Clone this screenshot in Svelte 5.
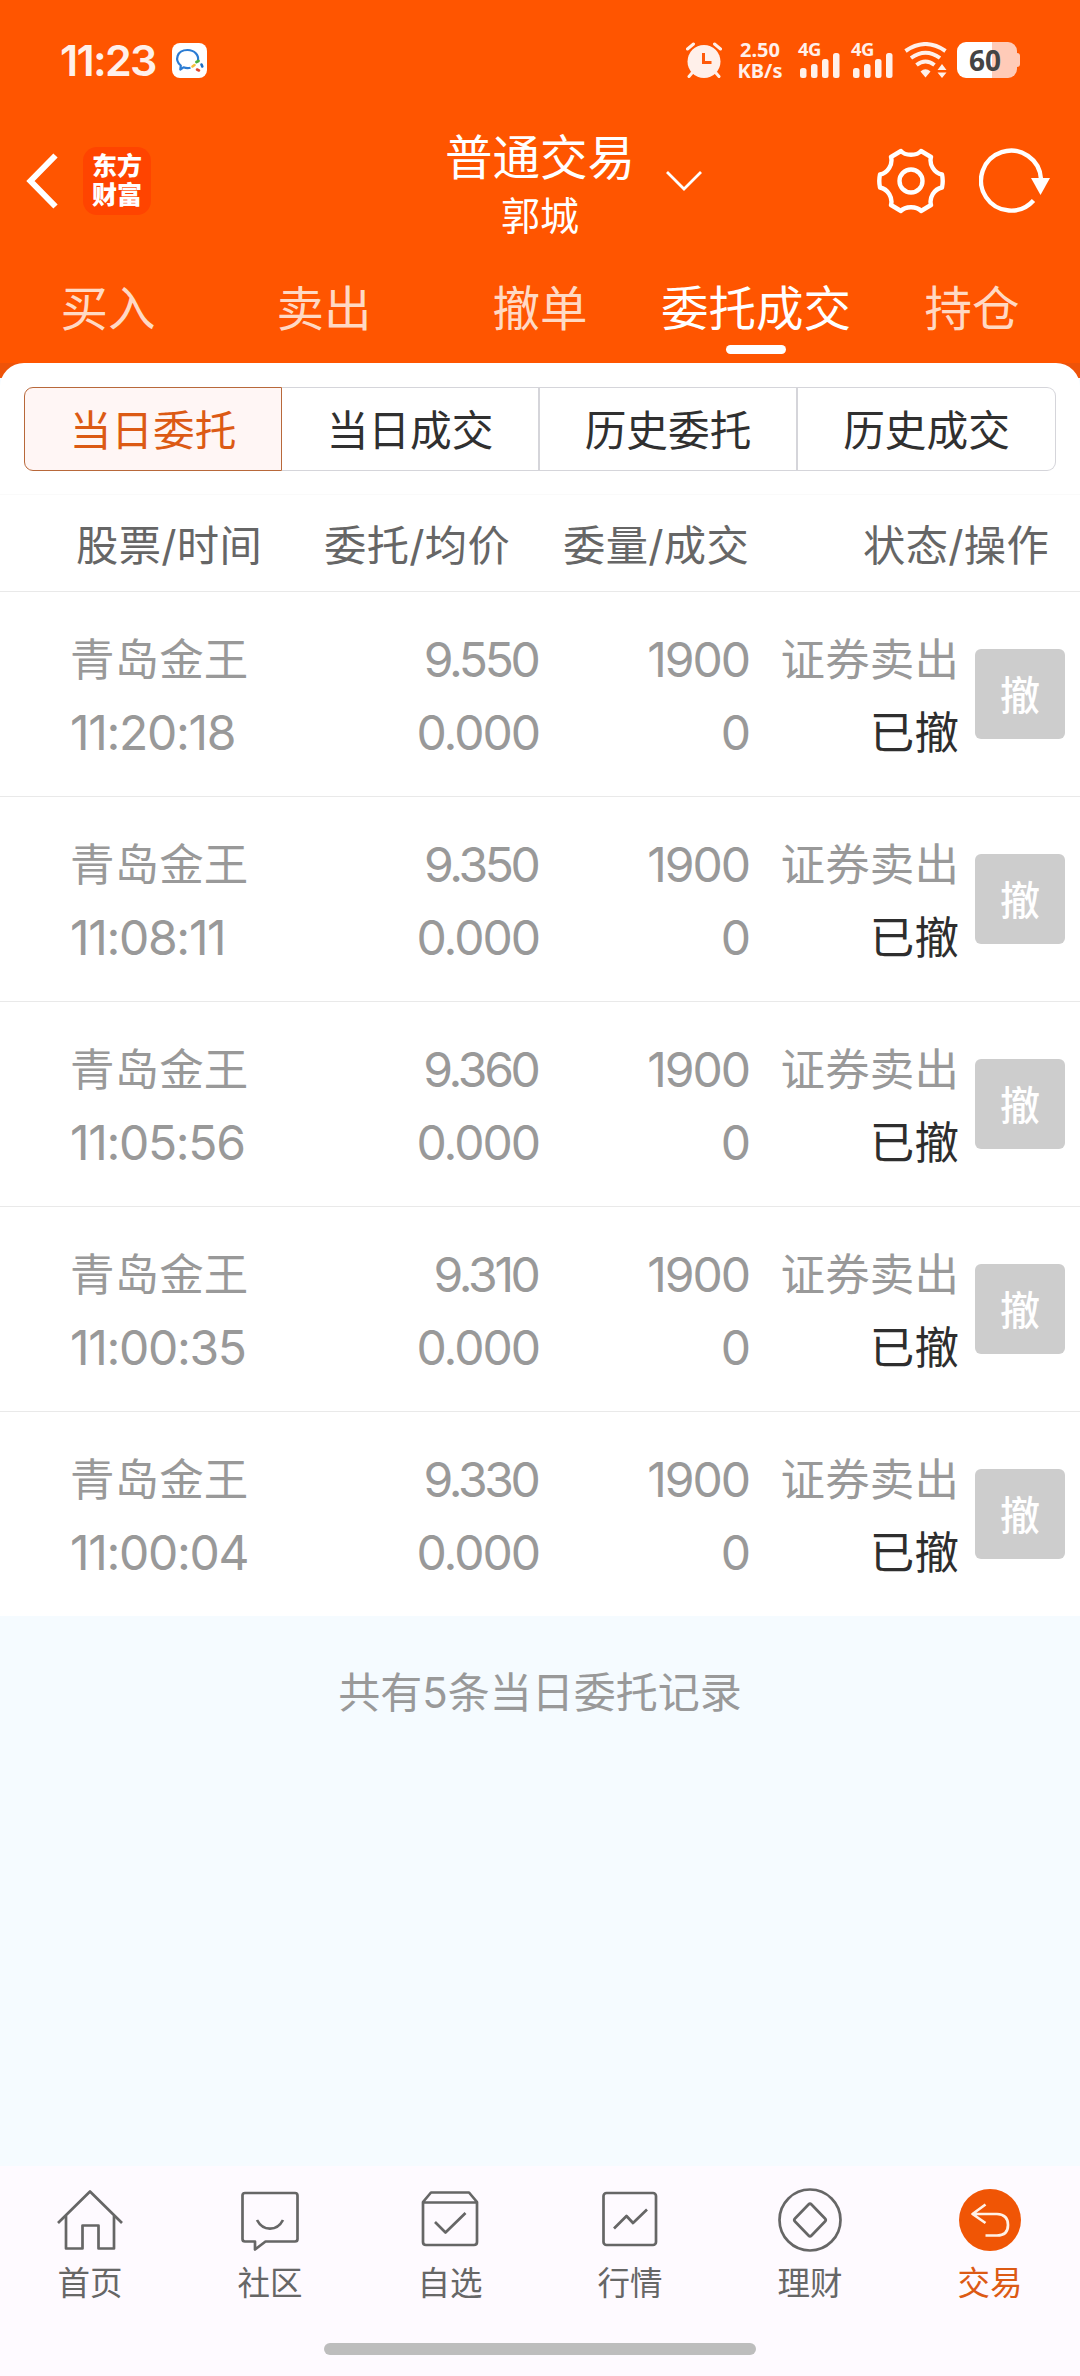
<script>
  const tabs = ['买入', '卖出', '撤单', '委托成交', '持仓'];
  const segments = ['当日委托', '当日成交', '历史委托', '历史成交'];
  const orders = [
    { time: '11:20:18', price: '9.550' },
    { time: '11:08:11', price: '9.350' },
    { time: '11:05:56', price: '9.360' },
    { time: '11:00:35', price: '9.310' },
    { time: '11:00:04', price: '9.330' }
  ];
  const nav = ['首页', '社区', '自选', '行情', '理财', '交易'];
  const activeTab = 3;
  const activeSegment = 0;
  const activeNav = 5;
</script>

{#snippet signal()}
  <div class="signal">
    <span>4G</span>
    <svg width="42" height="26" viewBox="0 0 42 26" fill="#fff0ea">
      <rect x="2" y="16" width="6.5" height="10" rx="2.5" />
      <rect x="13" y="12" width="6.5" height="14" rx="2.5" />
      <rect x="24" y="7" width="6.5" height="19" rx="2.5" />
      <rect x="35" y="1" width="6.5" height="25" rx="2.5" />
    </svg>
  </div>
{/snippet}

<div class="screen">
  <header>
    <div class="status">
      <span class="clock">11:23</span>
      <svg class="wecom" width="35" height="35" viewBox="0 0 35 35" fill="none">
        <rect width="35" height="35" rx="8" fill="#fff" />
        <path d="M18.500 24.800C16 25.500 13.500 25.200 11.500 24.300L8.300 26.500L8.800 22.500C2.500 17.500 4.500 7 15.500 7C22.500 7 27 12 26 17.500" stroke="#2b7cd3" stroke-width="2.200" stroke-linejoin="round" />
        <path d="M24.500 19L26.500 18" stroke="#4caf3c" stroke-width="2.800" stroke-linecap="round" />
        <path d="M29.500 21.500L30.300 23.500" stroke="#1f6fc4" stroke-width="2.600" stroke-linecap="round" />
        <path d="M27 27.500L25 26.500" stroke="#e0482c" stroke-width="2.600" stroke-linecap="round" />
        <path d="M20.500 23.500L22.500 22" stroke="#f6bd3b" stroke-width="2.600" stroke-linecap="round" />
      </svg>
      <div class="indicators">
        <svg width="36" height="36" viewBox="0 0 36 36" fill="none">
          <circle cx="18" cy="19.500" r="16.500" fill="#fff0ea" />
          <path d="M1.500 7L7.500 2M34.500 7L28.500 2M6 31L3 34.500M30 31L33 34.500" stroke="#fff0ea" stroke-width="3" stroke-linecap="round" />
          <path d="M17.500 11V20.500H25.500" stroke="#ff5a0a" stroke-width="3" />
        </svg>
        <div class="speed"><span>2.50</span><span>KB/s</span></div>
        {@render signal()}
        {@render signal()}
        <svg class="wifi" width="43" height="36" viewBox="0 0 43 36" fill="none" stroke="#fff0ea" stroke-width="4">
          <path d="M1.500 9Q21.500 -5 41.500 9" />
          <path d="M7 16Q21.500 5.500 36 16" />
          <path d="M12.500 23Q21.500 16 30.500 23" />
          <path d="M16.500 29.500Q21.500 25 26.500 29.500L21.500 35.500Z" fill="#fff0ea" stroke="none" />
          <path d="M33.500 28L38 22L42.500 28ZM33.500 30.500L38 36L42.500 30.500Z" fill="#fff0ea" stroke="none" />
        </svg>
        <div class="battery"><span>60</span></div>
      </div>
    </div>

    <div class="titlebar">
      <div class="left">
        <svg width="32" height="56" viewBox="0 0 32 56" fill="none" stroke="#fff" stroke-width="6">
          <path d="M29.500 2.500L4.500 28L29.500 53.500" />
        </svg>
        <div class="brand"><span>东方</span><span>财富</span></div>
      </div>
      <div class="title">
        <h1>普通交易</h1>
        <p>郭城</p>
      </div>
      <div class="right">
        <svg class="chevron" width="38" height="22" viewBox="0 0 38 22" fill="none" stroke="#fff" stroke-width="2.800">
          <path d="M2 2L19 19L36 2" />
        </svg>
        <svg class="gear" width="68" height="66" viewBox="0 0 68 66" fill="none" stroke="#fff" stroke-width="4.400" stroke-linejoin="round">
          <path d="M24 3C28 8 40 8 44 3L54 9C52 16 57 25 65 26.500C66 31 66 35 65 39.500C57 41 52 50 54 57L44 63C40 58 28 58 24 63L14 57C16 50 11 41 3 39.500C2 35 2 31 3 26.500C11 25 16 16 14 9Z" />
          <circle cx="34" cy="33" r="11.500" />
        </svg>
        <svg class="reload" width="72" height="66" viewBox="0 0 72 66" fill="none">
          <path d="M54.500 52.500A30 30 0 1 1 62 31" stroke="#fff" stroke-width="4.400" />
          <path d="M52 30H71L61.500 47Z" fill="#fff" />
        </svg>
      </div>
    </div>

    <nav class="tabs">
      {#each tabs as tab, i}
        <span class="tab" class:active={i === activeTab}>{tab}</span>
      {/each}
    </nav>
  </header>

  <main>
    <section class="card">
      <div class="segments">
        {#each segments as segment, i}
          <span class="segment" class:active={i === activeSegment}>{segment}</span>
        {/each}
      </div>
      <div class="grid head">
        <span class="first">股票/时间</span>
        <span>委托/均价</span>
        <span>委量/成交</span>
        <span class="last">状态/操作</span>
      </div>
      {#each orders as order}
        <div class="grid row">
          <div class="cell first"><span class="name">青岛金王</span><span class="time">{order.time}</span></div>
          <div class="cell"><span class="price">{order.price}</span><span>0.000</span></div>
          <div class="cell"><span>1900</span><span>0</span></div>
          <div class="cell state"><span>证券卖出</span><span class="done">已撤</span></div>
          <span class="cancel">撤</span>
        </div>
      {/each}
    </section>
    <p class="summary">共有5条当日委托记录</p>
  </main>

  <footer>
    <div class="items">
      {#each nav as label, i}
        <div class="item" class:active={i === activeNav}>
          <svg width="68" height="68" viewBox="0 0 68 68" fill="none" stroke="#666" stroke-width="2.700" stroke-linejoin="round">
            {#if i === 0}
              <path d="M2 37L34 5.500L66 37" />
              <path d="M10 30V62.500H26.500V39.500H42.500V62.500H58V30" />
            {:else if i === 1}
              <path d="M9 7H59Q61.500 7 61.500 9.500V53Q61.500 55.500 59 55.500H29.500L19 63.500V55.500H9Q6.500 55.500 6.500 53V9.500Q6.500 7 9 7Z" />
              <path d="M21 34C27 45.500 41 45.500 47 34" />
            {:else if i === 2}
              <path d="M7 16L15 6.500H53L61 16V56Q61 59 58 59H10Q7 59 7 56ZM7 16.500H61" />
              <path d="M19 36L29.500 46.500L49.500 27" />
            {:else if i === 3}
              <rect x="7.500" y="7" width="52.500" height="52" rx="3" />
              <path d="M18 42.500L30.500 30L37 37L51 23.500" />
            {:else if i === 4}
              <circle cx="34" cy="34" r="30.500" />
              <path d="M32.500 18.500Q34 17 35.500 18.500L49 32.500Q50.500 34 49 35.500L35.500 49.500Q34 51 32.500 49.500L19 35.500Q17.500 34 19 32.500Z" />
            {:else}
              <circle cx="34" cy="34" r="31" fill="#f05505" stroke="none" />
              <path d="M29.500 18.500L16.500 28L29.500 37M17 28H41Q52 28.500 52 39Q52 49.500 41 49.500H29.500" stroke="#fff1e6" />
            {/if}
          </svg>
          <span>{label}</span>
        </div>
      {/each}
    </div>
    <div class="handle"></div>
  </footer>
</div>

<style>
  :global(body) { margin: 0; }
  * { box-sizing: border-box; }
  svg { display: block; flex: none; }
  .screen {
    display: flex;
    flex-direction: column;
    width: 1080px;
    height: 2376px;
    overflow: hidden;
    background: #f5fbff;
    font-family: Inter, "Noto Sans CJK SC", sans-serif;
  }
  header { height: 363px; background: #ff5500; color: #fff; }

  .status { display: flex; align-items: center; height: 120px; padding: 0 60px; color: #fff0ea; }
  .clock { width: 97px; font-size: 43px; font-weight: 600; letter-spacing: -1.700px; white-space: nowrap; }
  .wecom { margin-left: 15px; }
  .indicators { display: flex; align-items: center; height: 36px; margin-left: auto; }
  .speed {
    display: flex;
    flex-direction: column;
    gap: 1px;
    width: 46px;
    margin: 0 15px;
    text-align: center;
    font: 700 20px/20px "Noto Sans", sans-serif;
  }
  .signal { display: flex; flex-direction: column; width: 42px; height: 36px; margin-right: 11px; }
  .signal span { height: 10px; font: 700 18.500px/14px "Noto Sans", sans-serif; letter-spacing: -0.500px; }
  .wifi { margin-left: 0; }
  .battery {
    position: relative;
    width: 60px;
    height: 36px;
    margin: 0 3px 0 10px;
    padding-left: 12px;
    border-radius: 9px;
    background: linear-gradient(90deg, #fff 35px, #ffcbb8 35px);
    color: #444;
    font: 700 28px/36px "Noto Sans", sans-serif;
  }
  .battery::after {
    content: "";
    position: absolute;
    right: -3px;
    top: 11px;
    width: 3px;
    height: 14px;
    border-radius: 0 3px 3px 0;
    background: #ffcbb8;
  }

  .titlebar { display: grid; grid-template-columns: 1fr auto 1fr; height: 122px; }
  .left, .right { display: flex; align-items: center; }
  .left { gap: 25px; padding-left: 26px; }
  .brand {
    display: flex;
    flex-direction: column;
    justify-content: center;
    width: 68px;
    height: 68px;
    border-radius: 14px;
    background: #ff4400;
    text-align: center;
    font-size: 25px;
    font-weight: 900;
    line-height: 29px;
  }
  .title { padding-top: 8px; text-align: center; }
  h1 { margin: 0 0 3px; font-size: 47.500px; font-weight: 400; line-height: 60px; }
  .title p { margin: 0; font-size: 39px; line-height: 50px; }
  .chevron { margin-left: 30px; }
  .gear { margin-left: auto; }
  .reload { margin: 0 29px 0 34px; }

  .tabs { display: grid; grid-template-columns: repeat(5, 1fr); height: 121px; }
  .tab { position: relative; padding-top: 32px; text-align: center; font-size: 47.500px; line-height: 70px; color: #ffd9c4; }
  .tab.active { color: #fff; }
  .tab.active::after {
    content: "";
    position: absolute;
    left: 78px;
    bottom: 9px;
    width: 60px;
    height: 9px;
    border-radius: 5px;
    background: #fff;
  }

  main { flex: 1; background: linear-gradient(#ee5309 15px, #f5fbff 15px); }
  .card { background: #fff; border-radius: 24px 24px 0 0; padding-top: 24px; }
  .segments { display: grid; grid-template-columns: repeat(4, 258px); height: 84px; margin-left: 24px; }
  .segment {
    height: 84px;
    padding-top: 2px;
    border: 1px solid #d5d5da;
    border-left-width: 0;
    border-right-width: 2px;
    text-align: center;
    font-size: 41.700px;
    line-height: 82px;
    color: #303030;
  }
  .segment:last-child { border-right-width: 1px; border-radius: 0 9px 9px 0; }
  .segment.active {
    border: 1px solid #b8683a;
    border-radius: 9px 0 0 9px;
    background: #fff6f5;
    color: #dc5a14;
  }
  .grid { display: grid; grid-template-columns: 275px 264px 210px 210px 1fr; border-bottom: 1px solid #e9e9e9; }
  .head {
    height: 98px;
    margin-top: 23px;
    padding-right: 31px;
    border-top: 1px solid #fafafa;
    font-size: 42.300px;
    letter-spacing: 0.300px;
    line-height: 101px;
    color: #666;
  }
  .head span { height: 96px; text-align: right; white-space: nowrap; }
  .head .first { padding-right: 13px; }
  .head span:nth-child(2) { padding-right: 29px; }
  .head .last { grid-column: 4 / 6; }
  .row { height: 205px; align-items: center; color: #999; font-size: 48px; }
  .row:last-child { height: 204px; border-bottom: 0; }
  .cell { display: flex; flex-direction: column; padding-top: 3px; text-align: right; line-height: 73px; letter-spacing: -2px; }
  .cell span { height: 73px; white-space: nowrap; }
  .cell.first { padding-left: 70px; text-align: left; }
  .time { letter-spacing: -1.300px; }
  .price { margin-right: 1.400px; letter-spacing: -3.300px; }
  .name, .state { letter-spacing: 0.100px; font-size: 44.500px; }
  .name { line-height: 75px; }
  .state { padding-top: 5px; }
  .done { color: #2e2e2e; }
  .cancel {
    width: 90px;
    height: 90px;
    margin-left: 16px;
    border-radius: 6px;
    background: #cdcdcd;
    color: #fff;
    text-align: center;
    font-size: 40px;
    font-weight: 500;
    line-height: 94px;
  }
  .summary { margin: 0; padding-top: 47px; text-align: center; font-size: 42px; line-height: 60px; color: #999; }

  footer { height: 210px; background: #fefaff; }
  .items { display: grid; grid-template-columns: repeat(6, 180px); height: 177px; padding-top: 20px; }
  .item { display: flex; flex-direction: column; align-items: center; color: #666; font-size: 32.500px; line-height: 48px; }
  .item span { margin-top: 6px; }
  .item.active { color: #dc5a14; }
  .handle { width: 432px; height: 12px; margin: 0 auto; border-radius: 6px; background: #bdbdbd; }
</style>
